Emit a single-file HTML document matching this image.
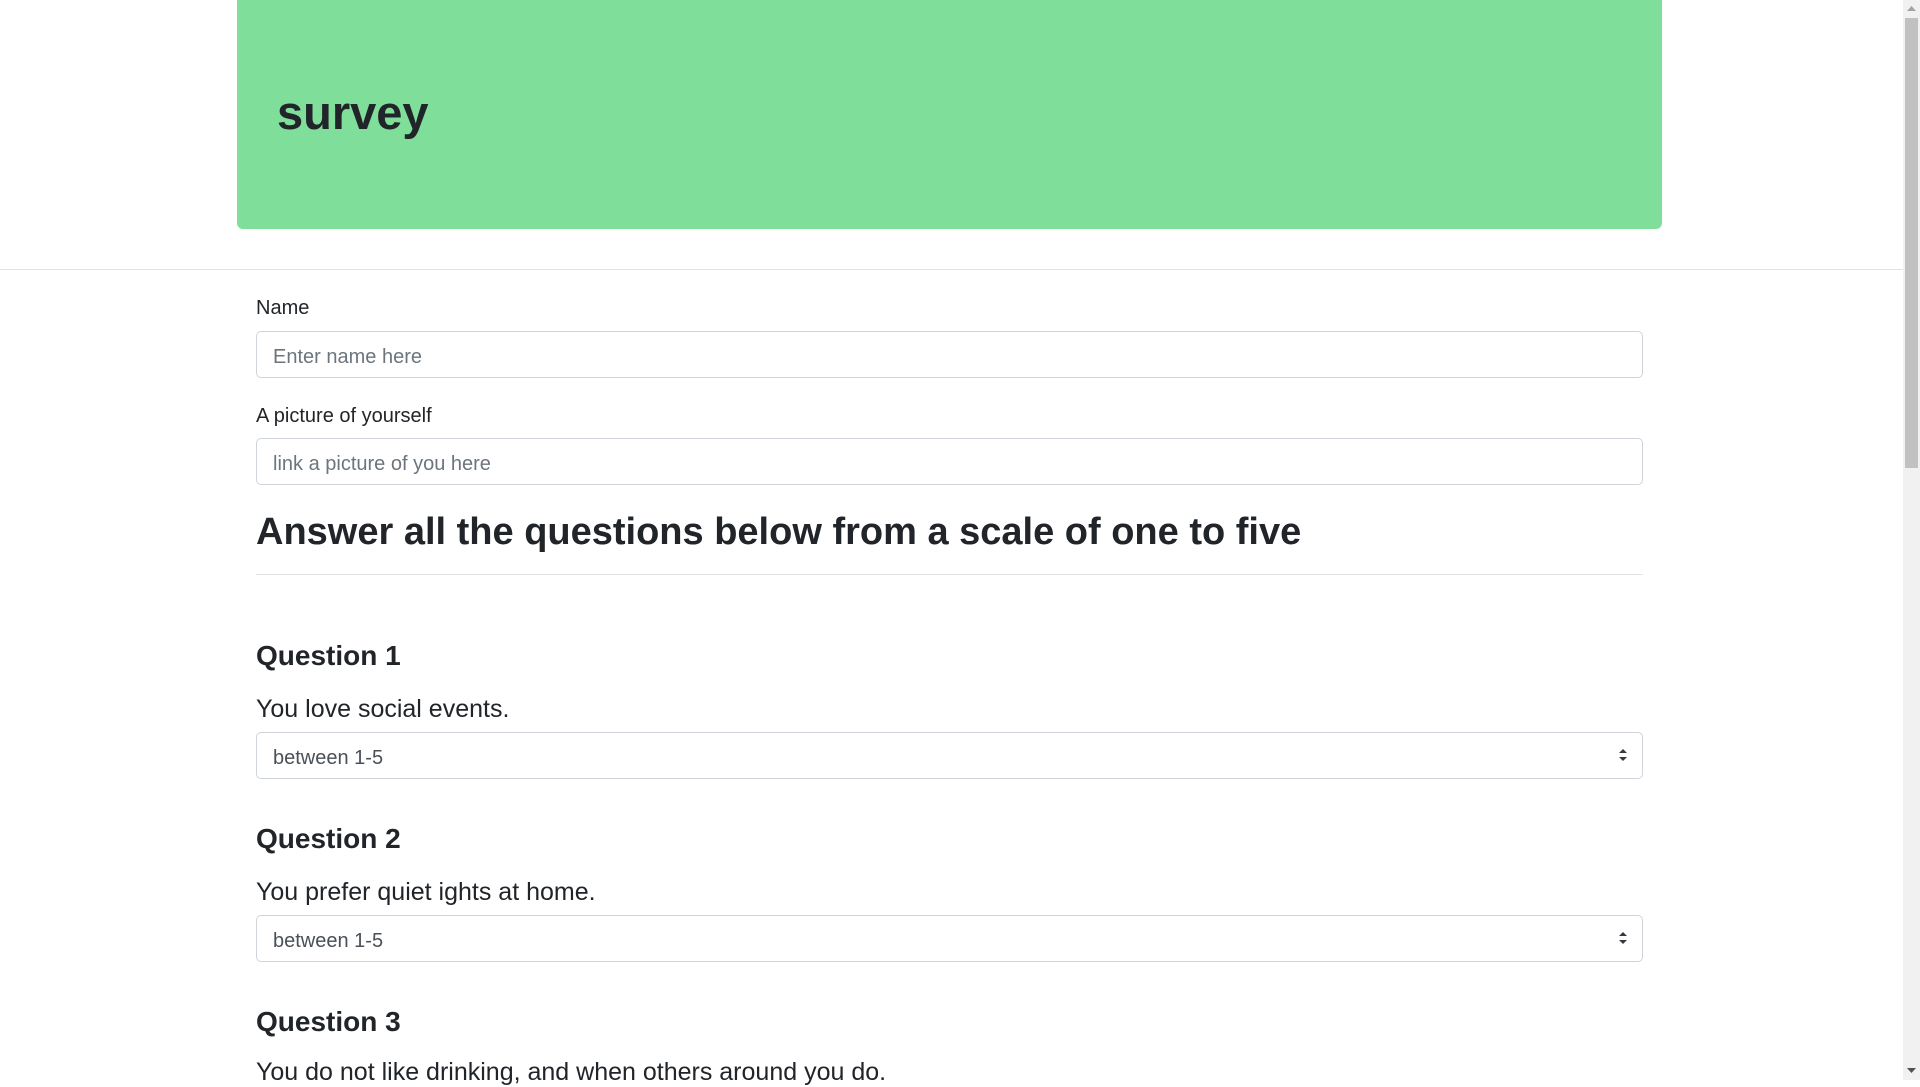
<!DOCTYPE html>
<html><head><meta charset="utf-8"><style>
*{margin:0;padding:0;box-sizing:border-box}
body{width:1920px;height:1080px;overflow:hidden;background:#fff;font-family:"Liberation Sans",sans-serif;color:#212529;position:relative}
.a{position:absolute;white-space:nowrap}
.jumbo{left:237px;top:0;width:1425px;height:229px;background:#7ede9a;border-radius:0 0 6px 6px}
.hr{left:0;top:269px;width:1903px;height:1px;background:#e3e3e3}
.lbl{font-size:20px;line-height:24px}
.inp{left:256px;width:1387px;height:47px;border:1px solid #ced4da;border-radius:5px;font-size:20px;color:#6c757d;padding-left:16px;padding-top:3px;line-height:45px}
.sel{color:#495057}
.q{font-size:28px;line-height:40px;font-weight:bold;left:256px}
.t{font-size:25px;line-height:30px;left:256px}
.arr{position:absolute;right:14px;top:14px;width:10px;height:16px}
.sb{left:1903px;top:0;width:17px;height:1080px;background:#f1f1f1}
.th{left:1905px;top:18px;width:13px;height:450px;background:#c1c1c1}
</style></head><body>
<div class="a jumbo"></div>
<div class="a" style="left:277px;top:85px;font-size:47px;line-height:56px;font-weight:bold">survey</div>
<div class="a hr"></div>
<div class="a lbl" style="left:256px;top:296px">Name</div>
<div class="a inp" style="top:331px">Enter name here</div>
<div class="a lbl" style="left:256px;top:404px">A picture of yourself</div>
<div class="a inp" style="top:438px">link a picture of you here</div>
<div class="a" style="left:256px;top:508px;font-size:38px;line-height:48px;font-weight:bold">Answer all the questions below from a scale of one to five</div>
<div class="a" style="left:256px;top:574px;width:1387px;height:1px;background:#e3e3e3"></div>
<div class="a q" style="top:636px">Question 1</div>
<div class="a t" style="top:694px">You love social events.</div>
<div class="a inp sel" style="top:732px">between 1-5<svg class="arr" viewBox="0 0 10 16"><path d="M5 2L9 6H1Z M5 14L9 10H1Z" fill="#343a40"/></svg></div>
<div class="a q" style="top:819px">Question 2</div>
<div class="a t" style="top:877px">You prefer quiet ights at home.</div>
<div class="a inp sel" style="top:915px">between 1-5<svg class="arr" viewBox="0 0 10 16"><path d="M5 2L9 6H1Z M5 14L9 10H1Z" fill="#343a40"/></svg></div>
<div class="a q" style="top:1002px">Question 3</div>
<div class="a t" style="top:1057px">You do not like drinking, and when others around you do.</div>
<div class="a sb"></div>
<div class="a th"></div>
<svg class="a" style="left:1906px;top:4px" width="11" height="8"><path d="M1 7L5.5 2L10 7Z" fill="#a3a3a3"/></svg>
<svg class="a" style="left:1906px;top:1067px" width="11" height="8"><path d="M1 1L5.5 6L10 1Z" fill="#505050"/></svg>
</body></html>
